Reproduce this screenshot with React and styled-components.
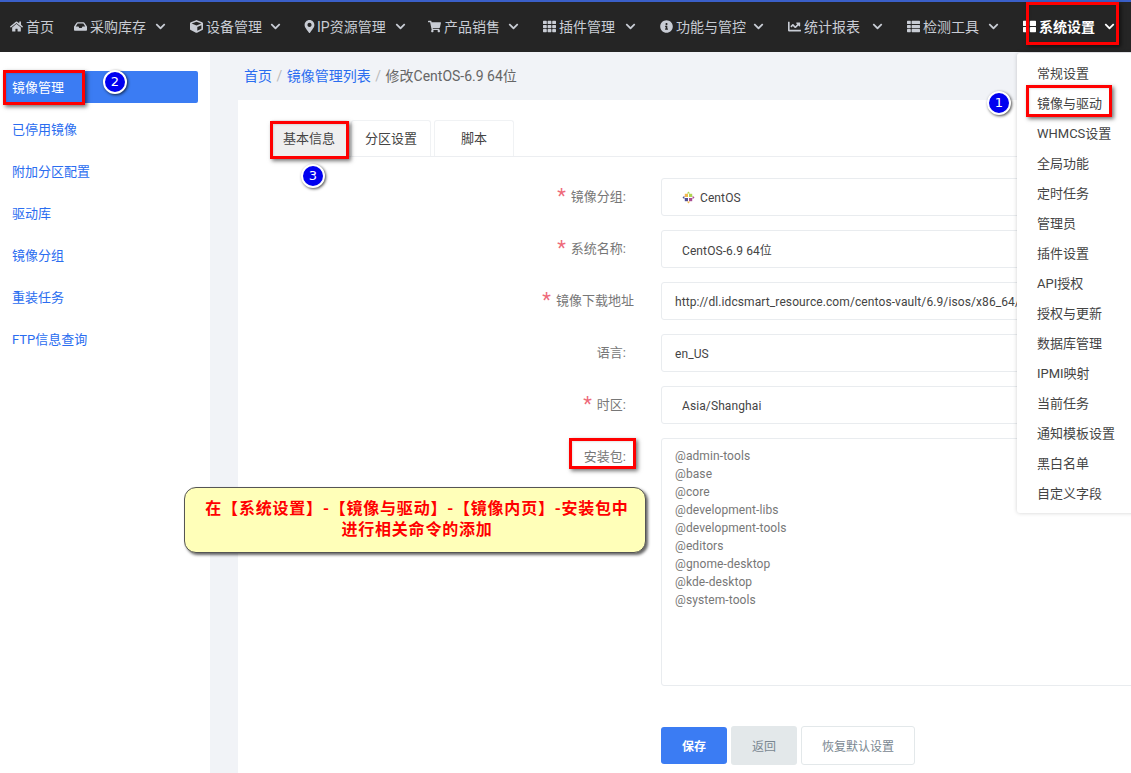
import React from "react";
import styled, { createGlobalStyle } from "styled-components";
import {
  FaHome, FaInbox, FaCube, FaMapMarkerAlt, FaShoppingCart, FaTh,
  FaInfoCircle, FaChartLine, FaThList, FaThLarge, FaChevronDown,
} from "react-icons/fa";

const Global = createGlobalStyle`
  html, body { margin: 0; padding: 0; background: #fff; }
  body { font-family: Roboto, "Noto Sans CJK SC", sans-serif; }
  * { box-sizing: border-box; }
`;

const Page = styled.div`
  position: relative;
  width: 1131px;
  height: 773px;
  overflow: hidden;
  display: flex;
  flex-direction: column;
`;

const TopBar = styled.nav`
  height: 52px;
  flex: none;
  background: #252525;
  border-top: 2px solid #3a5fc8;
  display: flex;
  align-items: center;
  padding: 0 0 2px 10px;
  gap: 24px;
`;

const NavItem = styled.div`
  display: flex;
  align-items: center;
  flex: none;
  width: ${(p) => p.$w}px;
  font-size: 14px;
  color: ${(p) => (p.$active ? "#fff" : "#c8ccd4")};
  font-weight: ${(p) => (p.$active ? 700 : 400)};
  white-space: nowrap;
  svg.lead {
    font-size: 13px;
    margin: ${(p) => (p.$narrow ? "0 1px 0 -2px" : "0 3px 0 0")};
    flex: none;
  }
  svg.chev {
    font-size: 11px;
    margin-left: auto;
    margin-right: ${(p) => (p.$narrow ? -2 : 0)}px;
    flex: none;
  }
`;

const Body = styled.div`
  flex: 1;
  display: flex;
  min-height: 0;
`;

const Side = styled.aside`
  width: 210px;
  flex: none;
  background: #fff;
  padding: 19px 12px 0 3px;
  display: flex;
  flex-direction: column;
  gap: 10px;
`;

const SideItem = styled.div`
  height: 32px;
  line-height: 34px;
  padding-left: 9px;
  font-size: 13px;
  border-radius: 2px;
  color: ${(p) => (p.$active ? "#fff" : "#2a6df0")};
  background: ${(p) => (p.$active ? "#3b7cf3" : "transparent")};
`;

const Main = styled.main`
  flex: 1;
  min-width: 0;
  background: #f1f3f7;
  padding: 14px 0 0 28px;
  overflow: hidden;
`;

const Crumbs = styled.div`
  height: 20px;
  line-height: 20px;
  margin: 0 0 14px 6px;
  font-size: 14px;
  color: #666;
  display: flex;
  gap: 4.5px;
`;

const Crumb = styled.span`
  color: ${(p) => (p.$link ? "#2a6df0" : p.$sep ? "#bbb" : "#666")};
`;

const Card = styled.section`
  width: 1000px;
  height: 720px;
  background: #fff;
  padding: 20px 0 0 32px;
`;

const Tabs = styled.div`
  display: flex;
  height: 37px;
  gap: 3px;
  border-bottom: 1px solid #eceef1;
  margin-bottom: 21px;
`;

const Tab = styled.div`
  width: ${(p) => p.$w}px;
  height: 36px;
  font-size: 13px;
  line-height: 36px;
  text-align: center;
  color: #444;
  background: ${(p) => (p.$active ? "#efefef" : "#fff")};
  border: 1px solid #f0f2f4;
  border-bottom: none;
  border-radius: 3px 3px 0 0;
`;

const Form = styled.div`
  display: grid;
  grid-template-columns: 391px 1fr;
  row-gap: 14px;
`;

const Label = styled.label`
  height: 38px;
  display: flex;
  align-items: center;
  justify-content: flex-end;
  font-size: 13px;
  color: #777;
  padding-right: ${(p) => (p.$wide ? 27 : 35)}px;
  padding-bottom: 3px;
`;

const Star = styled.span`
  color: #ee6a7a;
  font-size: 20px;
  line-height: 18px;
  margin-right: 5px;
`;

const Field = styled.div`
  height: 38px;
  border: 1px solid #e9ecef;
  border-radius: 3px;
  display: flex;
  align-items: center;
  gap: 5px;
  font-size: 12px;
  letter-spacing: 0.1px;
  color: #444;
  padding: 1px 0 0 ${(p) => (p.$inset ? 20 : 13)}px;
  white-space: nowrap;
  overflow: hidden;
`;

const AreaField = styled.div`
  height: 248px;
  border: 1px solid #e9ecef;
  border-radius: 3px;
  padding: 8px 0 0 13px;
  font-size: 12px;
  letter-spacing: 0.1px;
  line-height: 18px;
  color: #777;
`;

const Buttons = styled.div`
  grid-column: 2;
  display: flex;
  gap: 4px;
  margin-top: 26px;
  align-items: center;
`;

const Button = styled.button`
  height: ${(p) => (p.$kind === "primary" ? 37 : 39)}px;
  width: ${(p) => p.$w}px;
  font: inherit;
  font-size: 12px;
  padding: 0;
  border-radius: 3px;
  border: ${(p) => (p.$kind === "ghost" ? "1px solid #e3e8ea" : "none")};
  color: ${(p) => (p.$kind === "primary" ? "#fff" : "#7a8791")};
  font-weight: ${(p) => (p.$kind === "primary" ? 700 : 400)};
  background: ${(p) =>
    p.$kind === "primary" ? "#3b7cf3" : p.$kind === "muted" ? "#e3e8ea" : "#fff"};
`;

const Dropdown = styled.div`
  position: absolute;
  left: 1017px;
  top: 53px;
  width: 130px;
  height: 460px;
  padding: 5px 0 0 20px;
  background: #fff;
  border-radius: 3px;
  box-shadow: 0 0 4px rgba(0, 0, 0, 0.18);
`;

const DropItem = styled.div`
  height: 30px;
  line-height: 31px;
  font-size: 13px;
  color: #444;
`;

const RedBox = styled.div`
  position: absolute;
  left: ${(p) => p.$x}px;
  top: ${(p) => p.$y}px;
  width: ${(p) => p.$w}px;
  height: ${(p) => p.$h}px;
  border: 3px solid #f00;
  box-shadow: 2px 2px 4px rgba(0, 0, 0, 0.55), inset 1px 1px 2px rgba(0, 0, 0, 0.1);
`;

const Badge = styled.div`
  position: absolute;
  left: ${(p) => p.$x - 12}px;
  top: ${(p) => p.$y - 12}px;
  width: 24px;
  height: 24px;
  border-radius: 50%;
  background: #0000f0;
  border: 2px solid #fff;
  box-shadow: 1px 1px 3px rgba(0, 0, 0, 0.7);
  color: #fff;
  font-size: 13px;
  font-family: "DejaVu Sans", sans-serif;
  line-height: 20px;
  text-align: center;
`;

const Callout = styled.div`
  position: absolute;
  left: 184px;
  top: 487px;
  width: 462px;
  height: 66px;
  padding: 9px 0 0 4px;
  background: #ffffb9;
  border: 1px solid #555;
  border-radius: 12px;
  box-shadow: 2px 2px 3px rgba(0, 0, 0, 0.6);
  text-align: center;
  color: #f00;
  font-family: "Noto Sans CJK SC", sans-serif;
  font-size: 16px;
  font-weight: 700;
  letter-spacing: 0.8px;
  line-height: 21px;
`;

const Logo = styled.svg`
  flex: none;
  opacity: 0.8;
`;

const navItems = [
  { icon: FaHome, label: "首页", w: 40, plain: true },
  { icon: FaInbox, label: "采购库存", w: 92 },
  { icon: FaCube, label: "设备管理", w: 91 },
  { icon: FaMapMarkerAlt, label: "IP资源管理", w: 99, narrow: true },
  { icon: FaShoppingCart, label: "产品销售", w: 91 },
  { icon: FaTh, label: "插件管理", w: 93 },
  { icon: FaInfoCircle, label: "功能与管控", w: 104 },
  { icon: FaChartLine, label: "统计报表", w: 95 },
  { icon: FaThList, label: "检测工具", w: 92 },
  { icon: FaThLarge, label: "系统设置", w: 92, active: true },
];

const sideItems = ["镜像管理", "已停用镜像", "附加分区配置", "驱动库", "镜像分组", "重装任务", "FTP信息查询"];

const menuItems = [
  "常规设置", "镜像与驱动", "WHMCS设置", "全局功能", "定时任务", "管理员", "插件设置", "API授权",
  "授权与更新", "数据库管理", "IPMI映射", "当前任务", "通知模板设置", "黑白名单", "自定义字段",
];

const packages = [
  "@admin-tools", "@base", "@core", "@development-libs", "@development-tools",
  "@editors", "@gnome-desktop", "@kde-desktop", "@system-tools",
];

function CentosLogo() {
  return (
    <Logo width="13" height="13" viewBox="0 0 13 13">
      <rect x="2.8" y="2.8" width="3.2" height="3.2" fill="#efa724" />
      <rect x="7" y="2.8" width="3.2" height="3.2" fill="#9ccd2a" />
      <rect x="7" y="7" width="3.2" height="3.2" fill="#932279" />
      <rect x="2.8" y="7" width="3.2" height="3.2" fill="#262577" />
      <path d="M6.5 .5 8.2 2.4H4.8z" fill="#9ccd2a" />
      <path d="M12.5 6.5 10.6 8.2V4.8z" fill="#932279" />
      <path d="M6.5 12.5 4.8 10.6h3.4z" fill="#efa724" />
      <path d="M.5 6.5 2.4 4.8v3.4z" fill="#262577" />
    </Logo>
  );
}

export default function App() {
  return (
    <Page>
      <Global />
      <TopBar>
        {navItems.map(({ icon: Icon, label, w, plain, active, narrow }) => (
          <NavItem key={label} $w={w} $active={active} $narrow={narrow}>
            <Icon className="lead" />
            {label}
            {!plain && <FaChevronDown className="chev" />}
          </NavItem>
        ))}
      </TopBar>
      <Body>
        <Side>
          {sideItems.map((item, i) => (
            <SideItem key={item} $active={i === 0}>{item}</SideItem>
          ))}
        </Side>
        <Main>
          <Crumbs>
            <Crumb $link>首页</Crumb>
            <Crumb $sep>/</Crumb>
            <Crumb $link>镜像管理列表</Crumb>
            <Crumb $sep>/</Crumb>
            <Crumb>修改CentOS-6.9 64位</Crumb>
          </Crumbs>
          <Card>
            <Tabs>
              <Tab $w={78} $active>基本信息</Tab>
              <Tab $w={80}>分区设置</Tab>
              <Tab $w={80}>脚本</Tab>
            </Tabs>
            <Form>
              <Label><Star>*</Star>镜像分组:</Label>
              <Field $inset><CentosLogo />CentOS</Field>
              <Label><Star>*</Star>系统名称:</Label>
              <Field $inset>CentOS-6.9 64位</Field>
              <Label $wide><Star>*</Star>镜像下载地址</Label>
              <Field>http://dl.idcsmart_resource.com/centos-vault/6.9/isos/x86_64/Ce</Field>
              <Label>语言:</Label>
              <Field>en_US</Field>
              <Label><Star>*</Star>时区:</Label>
              <Field $inset>Asia/Shanghai</Field>
              <Label>安装包:</Label>
              <AreaField>
                {packages.map((p) => <div key={p}>{p}</div>)}
              </AreaField>
              <Buttons>
                <Button $kind="primary" $w={66}>保存</Button>
                <Button $kind="muted" $w={66}>返回</Button>
                <Button $kind="ghost" $w={114}>恢复默认设置</Button>
              </Buttons>
            </Form>
          </Card>
        </Main>
      </Body>
      <Dropdown>
        {menuItems.map((m) => <DropItem key={m}>{m}</DropItem>)}
      </Dropdown>
      <RedBox $x={1026} $y={2} $w={93} $h={43} />
      <RedBox $x={1026} $y={85} $w={86} $h={32} />
      <RedBox $x={3} $y={70} $w={82} $h={35} />
      <RedBox $x={270} $y={121} $w={79} $h={38} />
      <RedBox $x={569} $y={438} $w={67} $h={31} />
      <Badge $x={999} $y={103}>1</Badge>
      <Badge $x={115} $y={82}>2</Badge>
      <Badge $x={313} $y={176}>3</Badge>
      <Callout>
        在【系统设置】-【镜像与驱动】-【镜像内页】-安装包中<br />
        进行相关命令的添加
      </Callout>
    </Page>
  );
}
